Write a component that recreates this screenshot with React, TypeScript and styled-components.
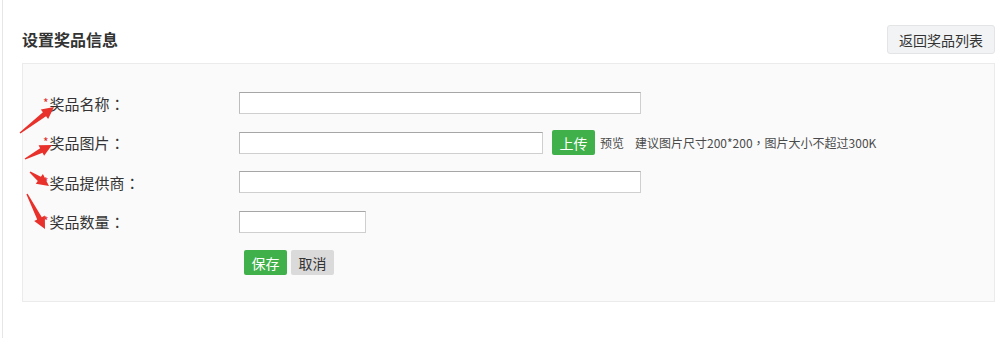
import styled, { createGlobalStyle } from "styled-components";

const GlobalStyle = createGlobalStyle`
  html, body {
    margin: 0;
    padding: 0;
    background: #fff;
  }
  body {
    font-family: "Microsoft YaHei", "Noto Sans CJK SC", "Liberation Sans", sans-serif;
    color: #333;
  }
`;

const Page = styled.div`
  position: relative;
  height: 338px;
  margin-left: 2px;
  border-left: 1px solid #e6e6e6;
  padding: 25px 5px 0 19px;
  box-sizing: border-box;
`;

const Header = styled.div`
  display: flex;
  justify-content: space-between;
  align-items: center;
  height: 29px;
  margin-bottom: 9px;
`;

const Title = styled.h2`
  margin: 0;
  font-size: 16px;
  font-weight: 600;
  color: #333;
  line-height: 29px;
`;

const BackButton = styled.button`
  height: 29px;
  padding: 0 11px;
  font-family: inherit;
  font-size: 14px;
  color: #333;
  background: #f2f3f5;
  border: 1px solid #e3e4e6;
  border-radius: 3px;
  cursor: pointer;
`;

const Panel = styled.div`
  background: #fafafa;
  border: 1px solid #ebebeb;
  padding: 28px 0 27px 20px;
  display: flex;
  flex-direction: column;
  gap: 17.5px;
`;

const Row = styled.div`
  display: flex;
  align-items: center;
  height: 22px;
`;

const Label = styled.label`
  width: 196px;
  flex-shrink: 0;
  font-size: 15px;
  color: #333;
  line-height: 22px;
  white-space: nowrap;
`;

const Star = styled.span`
  color: #e0302b;
  font-size: 12px;
  vertical-align: 2px;
  margin-right: 1px;
`;

// full-width punctuation drawn centred in its cell, as in the reference
const Punct = styled.span`
  font-family: "Noto Sans CJK TC", "Noto Sans CJK SC", sans-serif;
`;

const Input = styled.input<{ $w: number }>`
  width: ${(p) => p.$w}px;
  height: 22px;
  box-sizing: border-box;
  border: 1px solid #cfcfcf;
  border-top-color: #a6a6a6;
  border-left-color: #bdbdbd;
  background: #fff;
  padding: 0 4px;
  margin: 0;
  outline: none;
`;

const Button = styled.button<{ $kind: "green" | "gray" }>`
  height: 25px;
  width: 43px;
  padding: 0;
  border: 0;
  border-radius: 2px;
  font-family: inherit;
  font-size: 14px;
  color: ${(p) => (p.$kind === "green" ? "#fff" : "#333")};
  background: ${(p) => (p.$kind === "green" ? "#40b04a" : "#dadada")};
  cursor: pointer;
`;

const UploadButton = styled(Button)`
  margin-left: 9px;
  flex-shrink: 0;
`;

const Small = styled.span<{ $ml: number }>`
  margin-left: ${(p) => p.$ml}px;
  font-size: 12px;
  color: #4a4a4a;
  white-space: nowrap;
`;

const Actions = styled.div`
  display: flex;
  gap: 4px;
  padding-left: 201px;
  height: 24px;
`;

const Arrows = styled.svg`
  position: absolute;
  left: 0;
  top: 0;
  pointer-events: none;
`;

function Arrow({ x1, y1, x2, y2 }: { x1: number; y1: number; x2: number; y2: number }) {
  const dx = x2 - x1;
  const dy = y2 - y1;
  const len = Math.hypot(dx, dy);
  const ux = dx / len;
  const uy = dy / len;
  const px = -uy;
  const py = ux;
  const hl = 12;
  const hw = 6;
  const bx = x2 - ux * hl;
  const by = y2 - uy * hl;
  const pts = [
    `${x1 + px * 0.7},${y1 + py * 0.7}`,
    `${bx + px * 2.6},${by + py * 2.6}`,
    `${bx + px * hw},${by + py * hw}`,
    `${x2},${y2}`,
    `${bx - px * hw},${by - py * hw}`,
    `${bx - px * 2.6},${by - py * 2.6}`,
    `${x1 - px * 0.7},${y1 - py * 0.7}`,
  ].join(" ");
  return <polygon points={pts} fill="#e8312b" />;
}

export default function App() {
  return (
    <>
      <GlobalStyle />
      <Page>
        <Header>
          <Title>设置奖品信息</Title>
          <BackButton>返回奖品列表</BackButton>
        </Header>
        <Panel>
          <Row>
            <Label>
              <Star>*</Star>奖品名称<Punct>：</Punct>
            </Label>
            <Input $w={402} />
          </Row>
          <Row>
            <Label>
              <Star>*</Star>奖品图片<Punct>：</Punct>
            </Label>
            <Input $w={304} />
            <UploadButton $kind="green">上传</UploadButton>
            <Small $ml={5}>预览</Small>
            <Small $ml={11}>
              建议图片尺寸200*200<Punct>，</Punct>图片大小不超过300K
            </Small>
          </Row>
          <Row>
            <Label>
              <Star>*</Star>奖品提供商<Punct>：</Punct>
            </Label>
            <Input $w={402} />
          </Row>
          <Row>
            <Label>
              <Star>*</Star>奖品数量<Punct>：</Punct>
            </Label>
            <Input $w={127} />
          </Row>
          <Actions>
            <Button $kind="green">保存</Button>
            <Button $kind="gray">取消</Button>
          </Actions>
        </Panel>
        <Arrows width="80" height="240">
          <Arrow x1={17} y1={133} x2={51} y2={107} />
          <Arrow x1={22} y1={159} x2={49} y2={145} />
          <Arrow x1={27} y1={172} x2={46} y2={186} />
          <Arrow x1={24} y1={194} x2={42} y2={229} />
        </Arrows>
      </Page>
    </>
  );
}
